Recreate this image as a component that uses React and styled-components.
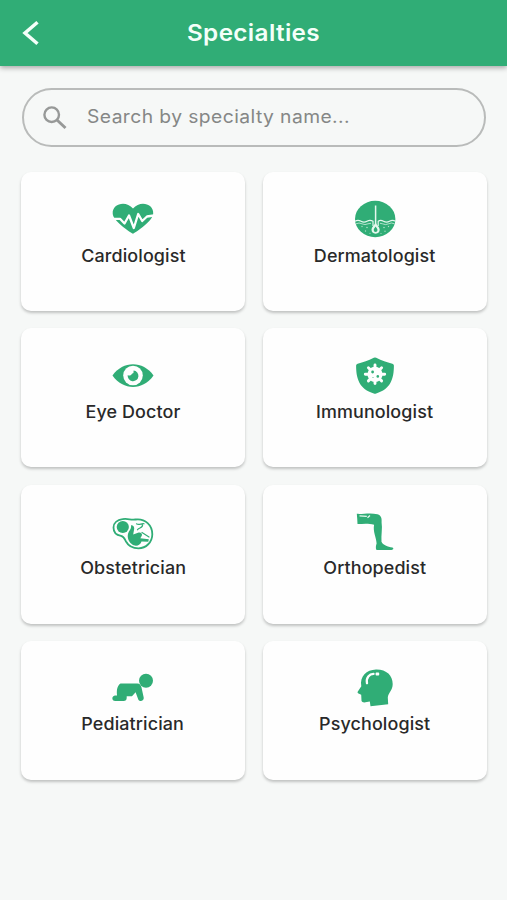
import React from 'react';
import styled, { createGlobalStyle } from 'styled-components';

const GREEN = '#30ad76';

const GlobalStyle = createGlobalStyle`
* {
  box-sizing: border-box;
}
body {
  margin: 0;
  background: #f6f8f7;
  font-family: Inter, "Liberation Sans", sans-serif;
}
`

const Page = styled.div`
min-height: 900px;
background: #f6f8f7;
`

const Header = styled.header`
display: grid;
grid-template-columns: 60px 1fr 60px;
align-items: center;
height: 66px;
background: ${GREEN};
box-shadow: 0 2px 5px rgba(0, 0, 0, 0.32);
`

const BackButton = styled.button`
display: flex;
padding: 0 0 0 22px;
border: none;
background: none;
cursor: pointer;
`

const Title = styled.h1`
margin: 0;
text-align: center;
color: #f4fff9;
font-size: 23px;
line-height: 28px;
font-weight: 600;
letter-spacing: 0.35px;
transform: scaleX(1.055);
`

const Content = styled.main`
padding: 22px 20px 0 21px;
`

const SearchBar = styled.label`
display: flex;
align-items: center;
height: 59px;
margin: 0 1px;
padding-left: 19px;
border: 2px solid #b9bbba;
border-radius: 30px;
`

const SearchInput = styled.input`
flex: 1;
margin: 0 0 3px 20px;
padding: 0;
border: none;
outline: none;
background: transparent;
font-family: inherit;
font-size: 18px;
letter-spacing: 0.4px;
color: #333;
transform: scaleX(1.07);
transform-origin: left;
&::placeholder {
  color: #858786;
  opacity: 1;
}
`

const Grid = styled.div`
display: grid;
grid-template-columns: 1fr 1fr;
gap: 17.3px 18px;
margin-top: 25px;
`

const Card = styled.div`
display: flex;
flex-direction: column;
align-items: center;
height: 139px;
padding-top: 25px;
border-radius: 10px;
background: #fefefe;
box-shadow: 0 2px 3px rgba(0, 0, 0, 0.22);
cursor: pointer;
`

const Icon = styled.svg`
display: block;
width: 44px;
height: 44px;
flex: none;
fill: ${GREEN};
`

const Name = styled.div`
margin-top: 3.5px;
font-size: 17px;
line-height: 22px;
font-weight: 500;
letter-spacing: 0.1px;
color: #292929;
transform: scaleX(1.055);
`

const Heart = () => (
  <>
    <path d="M22 36.7 C18 34.5 2 24 1.7 16.5 C1.2 6.5 15 3 22 11.5 C29 3 42.8 6.5 42.2 16.5 C42 24 26 34.5 22 36.7Z" />
    <path
      d="M1 21.8 H9 L13.5 26.5 L18 18.5 L22.8 31 L27.2 17 L31.2 24 L36 19.5 L43 18.5"
      fill="none" stroke="#fefefe" strokeWidth="2.3" strokeLinejoin="round"
    />
  </>
)

const Skin = () => (
  <>
    <ellipse cx="22.2" cy="22" rx="20.2" ry="18.2" />
    <g fill="none" stroke="#e4f7ed" strokeWidth="1.2">
      <path d="M22.6 8.5 V27" strokeWidth="1.5" />
      <path d="M2 24.2 Q5 22.4 8 24.2 T14 24.2 T20 24.2 V29 M42.5 24.2 Q39.5 22.4 36.5 24.2 T30.5 24.2 T25.2 24.2 V29" />
      <path d="M3 26.8 Q6 25.2 9 26.8 T15 26.8 L18 26.3 M41.5 26.8 Q38.5 25.2 35.5 26.8 T29.5 26.8 L27 26.3" strokeWidth="0.7" />
    </g>
    <path d="M22.6 25.5 C21.5 28 18.5 30 18.5 32.6 A4.1 4.1 0 0 0 26.7 32.6 C26.7 30 23.7 28 22.6 25.5Z" fill="#e4f7ed" />
    <path d="M22.6 29.5 C21.8 31 20.7 31.8 20.7 33 A1.9 1.9 0 0 0 24.5 33 C24.5 31.8 23.4 31 22.6 29.5Z" />
    <g fill="#a9dfc5">
      <circle cx="9" cy="29.5" r="0.7" />
      <circle cx="14" cy="30.5" r="0.8" />
      <circle cx="12.5" cy="34" r="0.7" />
      <circle cx="31" cy="30.5" r="0.8" />
      <circle cx="35.5" cy="29.5" r="0.7" />
      <circle cx="32" cy="34.3" r="0.7" />
      <circle cx="17" cy="36.3" r="0.6" />
      <circle cx="28" cy="36.5" r="0.6" />
    </g>
  </>
)

const Eye = () => (
  <>
    <path d="M1.5 22.5 C12 7.5 32 7.5 42.5 22.5 C32 37.8 12 37.8 1.5 22.5Z" />
    <circle cx="22" cy="22.5" r="9.8" fill="#fefefe" />
    <path d="M22.6 17.4 A5.4 5.4 0 1 1 16.7 22 A2.9 2.9 0 0 0 21 20.8 A3 3 0 0 0 22.6 17.4Z" />
  </>
)

const Shield = () => (
  <>
    <path d="M20.8 4.7 Q22 4.1 23.2 4.7 C29 7.8 33.5 9.2 39.4 10.7 Q40.9 11.1 40.9 12.6 C40.9 26 37.5 36.3 23.2 40.5 Q22 40.9 20.8 40.5 C6.5 36.3 3.1 26 3.1 12.6 Q3.1 11.1 4.6 10.7 C10.5 9.2 15 7.8 20.8 4.7Z" />
    <circle cx="22" cy="21.3" r="7.6" fill="#fefefe" />
    <path
      d="M22 12 V30.6 M12.3 21.3 H31.7 M15.4 14.7 L28.6 27.9 M28.6 14.7 L15.4 27.9"
      stroke="#fefefe" strokeWidth="2.9" strokeLinecap="round"
    />
    <circle cx="19.6" cy="19" r="1.4" />
    <circle cx="24.8" cy="23.4" r="1.3" />
    <circle cx="20" cy="24.6" r="0.5" />
  </>
)

const Fetus = () => (
  <>
    <path
      d="M11.5 9.2 C17 8.2 19.5 10.3 24.5 9.5 C34.5 8.3 41.3 15.5 41.3 24.2 C41.3 32.2 35 38.3 27.5 38.3 C21.5 38.3 17.3 35.8 15 31.5 C13.5 28.5 13 26.5 10 25.8 C4.5 25 2.5 21 2.5 17.5 C2.5 13.2 6.3 10 11.5 9.2Z"
      fill="none" stroke={GREEN} strokeWidth="1.8"
    />
    <circle cx="11.8" cy="17" r="6.1" />
    <path d="M20 15.3 C22.5 15 23.8 17.5 23 20 L22.2 24.5 L27 22.7 C29.5 21.8 31.8 23.5 30.8 25.8 L29.3 28.2 L37.8 29.3 L37.3 31.8 L30.5 31.5 C29.5 35.5 24.5 37.2 21 34.3 C16.5 31 16 25.5 17.5 22.5 C18.7 20 20.5 18.8 20 15.3Z" />
    <path
      d="M25.5 13.8 C28 15.8 30.5 13 33 13.8 M31.5 14.3 C32.5 18 27.5 17.5 26.5 19.8 M31 22.5 L38 27"
      fill="none" stroke={GREEN} strokeWidth="1.2" strokeLinejoin="round" strokeLinecap="round"
    />
  </>
)

const Leg = () => (
  <>
    <path d="M3.8 3.8 C9 4.5 17 2.3 24.5 4.3 C28.5 5.4 28.9 9 28.6 12.5 C29.6 18.5 28 25 28.5 31.7 C30 35 34.5 36.5 39.5 37.5 C41 38.4 40.5 39.8 38.5 39.9 H23.5 C22.3 38 23 35.5 23.6 33.5 C23.2 27 19.7 21.5 21.1 14.8 C15.5 13 10 13.8 4.5 14 C4.4 10.5 4.1 7.3 3.8 3.8Z" />
    <path d="M6.5 5.8 L13.8 6.3 M14.5 7.7 L17 5.6" fill="none" stroke="#e8f8ef" strokeWidth="1.3" />
  </>
)

const Baby = () => (
  <>
    <circle cx="35" cy="14.8" r="7" />
    <path d="M9.5 17.6 H26.3 C28.7 17.6 29.8 19.2 30.4 21.1 L32.7 31.4 C33.4 35.2 28 36.3 27.1 32.9 L24.6 26.3 L21 30.2 H15.7 V32.1 C15.7 34 14.6 35 12.6 35 H4.3 C0.3 35 0.5 29.6 4.3 29.5 H6.1 C5.6 26 5.6 20 9.5 17.6Z" />
  </>
)

const Head = () => (
  <>
    <path d="M23 3.5 C33.5 3.3 39.7 9.5 39.7 18 C39.7 24.5 35 27.2 34.8 31.5 L35.2 38.3 L17.5 40.2 L16.8 35.6 C13 36.3 9.2 37.4 8.5 34.8 L8.2 28.7 L5 27.2 C4 26.5 4.8 25.5 5.5 24.5 L8.3 20.2 C6.5 10.5 13.5 3.7 23 3.5Z" />
    <path d="M14 17.2 C12.8 11.5 16.5 8 20.5 7.8" fill="none" stroke="#fefefe" strokeWidth="2.3" strokeLinecap="round" />
    <rect x="22.6" y="6.6" width="3.6" height="3" rx="0.8" fill="#fefefe" />
  </>
)

const specialties = [
  { name: 'Cardiologist', Picture: Heart },
  { name: 'Dermatologist', Picture: Skin },
  { name: 'Eye Doctor', Picture: Eye },
  { name: 'Immunologist', Picture: Shield },
  { name: 'Obstetrician', Picture: Fetus },
  { name: 'Orthopedist', Picture: Leg },
  { name: 'Pediatrician', Picture: Baby },
  { name: 'Psychologist', Picture: Head },
]

export default function App() {
  return (
    <Page>
      <GlobalStyle />
      <Header>
        <BackButton>
          <svg width="18" height="26" viewBox="0 0 18 26">
            <path d="M15.5 2.2 L3 13 L15.5 23.8" fill="none" stroke="#f4fff9" strokeWidth="3.5" />
          </svg>
        </BackButton>
        <Title>Specialties</Title>
      </Header>
      <Content>
        <SearchBar>
          <svg width="24" height="24" viewBox="0 0 24 24" fill="none" stroke="#979998">
            <circle cx="8.7" cy="8.7" r="7.3" strokeWidth="2.4" />
            <path d="M14 14 L22.5 22" strokeWidth="3" />
          </svg>
          <SearchInput placeholder="Search by specialty name..." />
        </SearchBar>
        <Grid>
          {specialties.map(({ name, Picture }) => (
            <Card key={name}>
              <Icon viewBox="0 0 44 44"><Picture /></Icon>
              <Name>{name}</Name>
            </Card>
          ))}
        </Grid>
      </Content>
    </Page>
  )
}
